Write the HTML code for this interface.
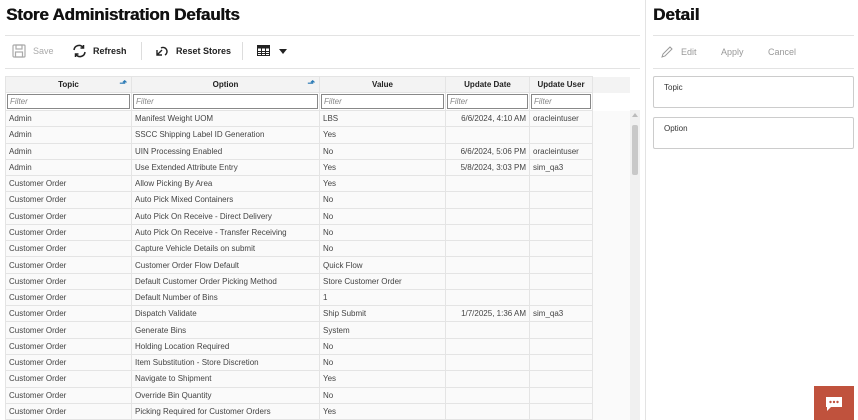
<!DOCTYPE html>
<html><head><meta charset="utf-8"><style>
*{box-sizing:border-box;margin:0;padding:0}
body{width:858px;height:420px;overflow:hidden;background:#fff;font-family:"Liberation Sans",sans-serif;color:#333;position:relative}
.abs{position:absolute}
h1{position:absolute;left:6px;top:5px;font-size:17px;font-weight:bold;color:#111;letter-spacing:-0.2px;text-shadow:0.5px 0 0 #111}
.hr{position:absolute;height:1px;background:#e3e3e3}
.tb{position:absolute;font-size:9px;font-weight:bold;color:#222;top:46px}
table{position:absolute;left:5px;top:76px;border-collapse:collapse;table-layout:fixed;font-size:8px}
td,th{border:1px solid #e4e4e4;padding:0 3px;white-space:nowrap;overflow:hidden;height:16.28px;text-align:left;font-weight:normal;background:#fafafa;color:#444}
th{background:#f3f3f3;font-weight:bold;text-align:center;color:#222;height:16px;position:relative}
tr.f td{background:#fff;padding:1px 1px;height:18px;border-color:#e4e4e4}
.fi{border:1px solid #888;height:15px;font-style:italic;color:#888;padding:2px 2px;font-size:8px}
td.r{text-align:right}
td.e{background:#fafafa;border:none}
.sort{position:absolute;right:4px;top:1px;color:#2a7ab5;font-size:9px;font-weight:bold}
</style></head><body>
<h1>Store Administration Defaults</h1>
<div class="hr" style="left:5px;top:35px;width:635px"></div>
<div class="hr" style="left:5px;top:68px;width:635px"></div>
<svg class="abs" style="left:12px;top:44px" width="14" height="14" viewBox="0 0 14 14" fill="none" stroke="#aaa" stroke-width="1.2"><rect x="1" y="1" width="12" height="12" rx="1"/><rect x="4" y="1" width="6" height="4"/><rect x="3.5" y="8" width="7" height="5"/></svg>
<div class="tb" style="left:33px;color:#aaa;font-weight:normal">Save</div>
<svg class="abs" style="left:72px;top:44px" width="15" height="14" viewBox="0 0 15 14" fill="none" stroke="#222" stroke-width="1.5"><path d="M2 6a5 5 0 0 1 9-2.5M13 8a5 5 0 0 1-9 2.5"/><path d="M11.5 1v3h-3M3.5 13v-3h3"/></svg>
<div class="tb" style="left:93px">Refresh</div>
<div class="abs" style="left:141px;top:42px;width:1px;height:18px;background:#ddd"></div>
<svg class="abs" style="left:155px;top:45px" width="14" height="12" viewBox="0 0 14 12" fill="none" stroke="#222" stroke-width="1.4"><path d="M2 10l5-5 M2 5v5h5"/><path d="M6 3a4 4 0 1 1 4 7"/></svg>
<div class="tb" style="left:176px">Reset Stores</div>
<div class="abs" style="left:242px;top:42px;width:1px;height:18px;background:#ddd"></div>
<svg class="abs" style="left:257px;top:45px" width="13" height="11" viewBox="0 0 13 11"><rect x="0.5" y="0.5" width="12" height="10" fill="none" stroke="#222"/><rect x="0.5" y="0.5" width="12" height="3" fill="#222"/><path d="M0 6.5h13M0 8.5h13M4.5 3v8M8.5 3v8" stroke="#222"/></svg>
<div class="abs" style="left:279px;top:49px;border-left:4px solid transparent;border-right:4px solid transparent;border-top:5px solid #222"></div>
<table>
<colgroup><col style="width:126px"><col style="width:188px"><col style="width:126px"><col style="width:84px"><col style="width:63px"><col style="width:38px"></colgroup>
<tr><th>Topic<span class="sort">⬏</span></th><th>Option<span class="sort">⬏</span></th><th>Value</th><th>Update Date</th><th>Update User</th><th style="background:#f3f3f3;border:none"></th></tr>
<tr class="f"><td><div class="fi">Filter</div></td><td><div class="fi">Filter</div></td><td><div class="fi">Filter</div></td><td><div class="fi">Filter</div></td><td><div class="fi">Filter</div></td><td style="border:none;background:#fff"></td></tr>
<tr><td>Admin</td><td>Manifest Weight UOM</td><td>LBS</td><td class="r">6/6/2024, 4:10 AM</td><td>oracleintuser</td><td class="e"></td></tr>
<tr><td>Admin</td><td>SSCC Shipping Label ID Generation</td><td>Yes</td><td></td><td></td><td class="e"></td></tr>
<tr><td>Admin</td><td>UIN Processing Enabled</td><td>No</td><td class="r">6/6/2024, 5:06 PM</td><td>oracleintuser</td><td class="e"></td></tr>
<tr><td>Admin</td><td>Use Extended Attribute Entry</td><td>Yes</td><td class="r">5/8/2024, 3:03 PM</td><td>sim_qa3</td><td class="e"></td></tr>
<tr><td>Customer Order</td><td>Allow Picking By Area</td><td>Yes</td><td></td><td></td><td class="e"></td></tr>
<tr><td>Customer Order</td><td>Auto Pick Mixed Containers</td><td>No</td><td></td><td></td><td class="e"></td></tr>
<tr><td>Customer Order</td><td>Auto Pick On Receive - Direct Delivery</td><td>No</td><td></td><td></td><td class="e"></td></tr>
<tr><td>Customer Order</td><td>Auto Pick On Receive - Transfer Receiving</td><td>No</td><td></td><td></td><td class="e"></td></tr>
<tr><td>Customer Order</td><td>Capture Vehicle Details on submit</td><td>No</td><td></td><td></td><td class="e"></td></tr>
<tr><td>Customer Order</td><td>Customer Order Flow Default</td><td>Quick Flow</td><td></td><td></td><td class="e"></td></tr>
<tr><td>Customer Order</td><td>Default Customer Order Picking Method</td><td>Store Customer Order</td><td></td><td></td><td class="e"></td></tr>
<tr><td>Customer Order</td><td>Default Number of Bins</td><td>1</td><td></td><td></td><td class="e"></td></tr>
<tr><td>Customer Order</td><td>Dispatch Validate</td><td>Ship Submit</td><td class="r">1/7/2025, 1:36 AM</td><td>sim_qa3</td><td class="e"></td></tr>
<tr><td>Customer Order</td><td>Generate Bins</td><td>System</td><td></td><td></td><td class="e"></td></tr>
<tr><td>Customer Order</td><td>Holding Location Required</td><td>No</td><td></td><td></td><td class="e"></td></tr>
<tr><td>Customer Order</td><td>Item Substitution - Store Discretion</td><td>No</td><td></td><td></td><td class="e"></td></tr>
<tr><td>Customer Order</td><td>Navigate to Shipment</td><td>Yes</td><td></td><td></td><td class="e"></td></tr>
<tr><td>Customer Order</td><td>Override Bin Quantity</td><td>No</td><td></td><td></td><td class="e"></td></tr>
<tr><td>Customer Order</td><td>Picking Required for Customer Orders</td><td>Yes</td><td></td><td></td><td class="e"></td></tr>
</table>
<div class="abs" style="left:630px;top:110px;width:10px;height:310px;background:#f0f0f0"></div>
<div class="abs" style="left:632px;top:125px;width:6px;height:50px;background:#c8c8c8;border-radius:2px"></div>
<div class="abs" style="left:632px;top:113px;border-left:3px solid transparent;border-right:3px solid transparent;border-bottom:4px solid #bbb"></div>
<div class="abs" style="left:645px;top:0;width:1px;height:420px;background:#e3e3e3"></div>
<div class="abs" style="left:653px;top:5px;font-size:17px;font-weight:bold;color:#111;text-shadow:0.5px 0 0 #111">Detail</div>
<div class="hr" style="left:653px;top:35px;width:201px"></div>
<div class="hr" style="left:653px;top:68px;width:201px"></div>
<svg class="abs" style="left:661px;top:45px" width="13" height="13" viewBox="0 0 13 13" fill="none" stroke="#999" stroke-width="1"><path d="M1 12l1-3 7-7 2 2-7 7z"/></svg>
<div class="abs" style="left:681px;top:47px;font-size:9px;color:#999">Edit</div>
<div class="abs" style="left:721px;top:47px;font-size:9px;color:#999">Apply</div>
<div class="abs" style="left:768px;top:47px;font-size:9px;color:#999">Cancel</div>
<div class="abs" style="left:653px;top:76px;width:201px;height:32px;border:1px solid #ccc;border-radius:2px;font-size:8px;color:#333;padding:6px 10px">Topic</div>
<div class="abs" style="left:653px;top:117px;width:201px;height:32px;border:1px solid #ccc;border-radius:2px;font-size:8px;color:#333;padding:6px 10px">Option</div>
<div class="abs" style="left:814px;top:386px;width:40px;height:34px;background:#c0523d"></div>
<svg class="abs" style="left:825px;top:396px" width="18" height="16" viewBox="0 0 18 16"><path d="M1 1h16v10H6l-4 4v-4H1z" fill="#fff"/><circle cx="5.5" cy="6" r="1.2" fill="#c0523d"/><circle cx="9" cy="6" r="1.2" fill="#c0523d"/><circle cx="12.5" cy="6" r="1.2" fill="#c0523d"/></svg>
</body></html>
